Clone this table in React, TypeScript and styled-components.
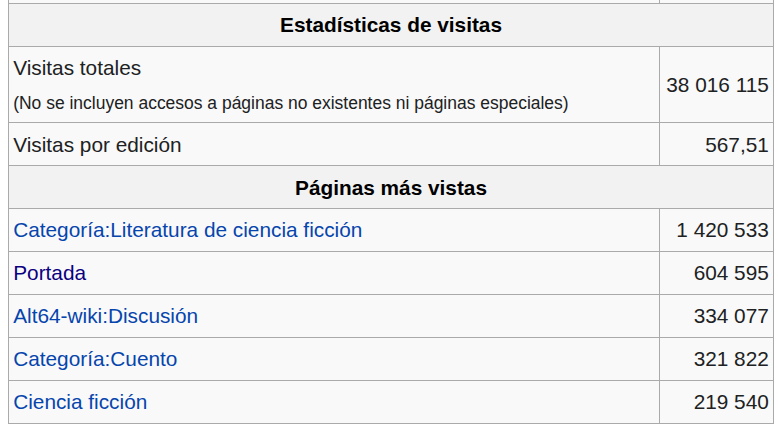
import React from "react";
import styled, { createGlobalStyle } from "styled-components";

const Global = createGlobalStyle`
  html, body { margin: 0; padding: 0; background: #ffffff; }
  body { font-family: "Liberation Sans", Arial, sans-serif; color: #222222; }
`;

const Page = styled.div`
  padding: 0 0 0 8px;
  overflow: hidden;
  height: 424px;
`;

const Table = styled.table`
  margin-top: -40px;
  width: 765px;
  table-layout: fixed;
  border-collapse: collapse;
  background: #f9f9f9;
  border: 1px solid #aaaaaa;
  font-size: 20.8px;
  line-height: 33.55px;
`;

const Row = styled.tr<{ $h?: number }>`
  height: ${(p) => (p.$h ? `${p.$h}px` : "auto")};
`;

const Head = styled.th`
  background: #f2f2f2;
  border: 1px solid #aaaaaa;
  padding: 4.2px;
  font-weight: bold;
  text-align: center;
  color: #000;
`;

const Cell = styled.td<{ $num?: boolean }>`
  border: 1px solid #aaaaaa;
  padding: 4.2px;
  text-align: ${(p) => (p.$num ? "right" : "left")};
  vertical-align: middle;
  color: #202122;
`;

const Note = styled.small`
  font-size: 84%;
  line-height: 1;
`;

const Link = styled.a<{ $visited?: boolean }>`
  color: ${(p) => (p.$visited ? "#0b0080" : "#0645ad")};
  text-decoration: none;
`;

const pages = [
  { name: "Categoría:Literatura de ciencia ficción", n: "1 420 533" },
  { name: "Portada", n: "604 595", visited: true },
  { name: "Alt64-wiki:Discusión", n: "334 077" },
  { name: "Categoría:Cuento", n: "321 822" },
  { name: "Ciencia ficción", n: "219 540" },
];

export default function App() {
  return (
    <>
      <Global />
      <Page>
        <Table>
          <colgroup>
            <col style={{ width: 651 }} />
            <col style={{ width: 114 }} />
          </colgroup>
          <tbody>
            <Row $h={43}>
              <Cell />
              <Cell $num />
            </Row>
            <tr>
              <Head colSpan={2}>Estadísticas de visitas</Head>
            </tr>
            <tr>
              <Cell>
                Visitas totales
                <br />
                <Note>(No se incluyen accesos a páginas no existentes ni páginas especiales)</Note>
              </Cell>
              <Cell $num>38 016 115</Cell>
            </tr>
            <tr>
              <Cell>Visitas por edición</Cell>
              <Cell $num>567,51</Cell>
            </tr>
            <tr>
              <Head colSpan={2}>Páginas más vistas</Head>
            </tr>
            {pages.map((p) => (
              <tr key={p.name}>
                <Cell>
                  <Link href="#" $visited={p.visited}>
                    {p.name}
                  </Link>
                </Cell>
                <Cell $num>{p.n}</Cell>
              </tr>
            ))}
          </tbody>
        </Table>
      </Page>
    </>
  );
}
